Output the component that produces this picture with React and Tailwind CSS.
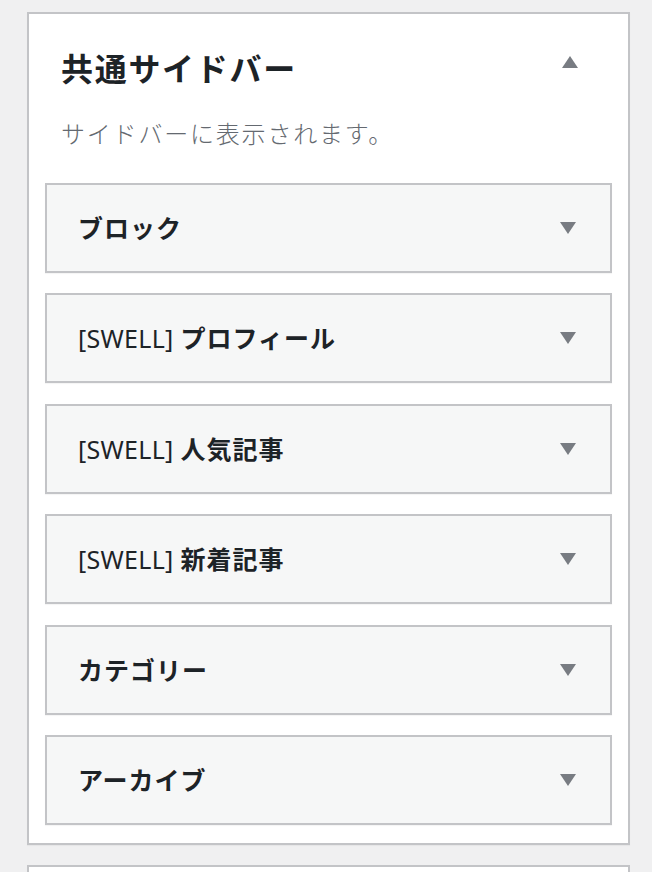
import React from 'react';

const items = [
  { tag: '', label: 'ブロック' },
  { tag: '[SWELL]', label: 'プロフィール' },
  { tag: '[SWELL]', label: '人気記事' },
  { tag: '[SWELL]', label: '新着記事' },
  { tag: '', label: 'カテゴリー' },
  { tag: '', label: 'アーカイブ' },
];

const Arrow = ({ up }) => (
  <svg width="16" height="12" viewBox="0 0 16 12" className="shrink-0">
    <path d={up ? 'M8 0 L16 12 L0 12 Z' : 'M0 0 L16 0 L8 12 Z'} fill="#787c82" />
  </svg>
);

export default function App() {
  return (
    <div
      className="min-h-[872px] bg-[#f0f0f1] pt-[12px] pl-[27px] overflow-hidden"
      style={{ fontFamily: '"Noto Sans", "Noto Sans CJK JP", sans-serif' }}
    >
      {/* 共通サイドバー */}
      <div className="w-[603px] border-2 border-[#c3c4c7] bg-white pt-[35px] px-4 pb-[18px] shadow-[0_1px_1px_rgba(0,0,0,0.04)]">
        <div className="flex items-start justify-between pl-[16px] pr-[34px]">
          <h2 className="text-[32px] leading-[40px] font-bold text-[#1d2327] tracking-[1.7px]">共通サイドバー</h2>
          <div className="mt-[7px]">
            <Arrow up />
          </div>
        </div>
        <p className="mt-[29px] pl-[16px] text-[24px] leading-[32px] font-light text-[#646970] tracking-[1.8px]">
          サイドバーに表示されます。
        </p>
        <div className="mt-[33px] flex flex-col gap-[20.4px]">
          {items.map((it) => (
            <div
              key={it.label}
              className="h-[90px] flex items-center justify-between border-2 border-[#c3c4c7] bg-[#f6f7f7] pl-[31px] pr-[34px] shadow-[0_1px_1px_rgba(0,0,0,0.04)]"
            >
              <span className="text-[25px] leading-[32px] font-semibold text-[#1d2327] tracking-[1px]">
                {it.tag && <span className="font-normal tracking-[0.3px]">{it.tag} </span>}
                {it.label}
              </span>
              <Arrow />
            </div>
          ))}
        </div>
      </div>

      {/* 次のパネル */}
      <div className="mt-[20px] w-[603px] h-[40px] border-2 border-b-0 border-[#c3c4c7] bg-white" />
    </div>
  );
}
